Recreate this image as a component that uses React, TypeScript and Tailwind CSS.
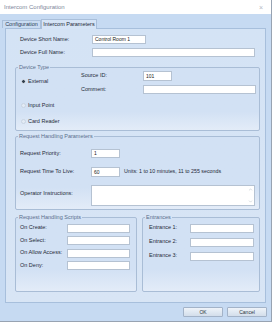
import { ChevronUp, ChevronDown } from "lucide-react";

const Box = ({ className = "", value }: { className?: string; value?: string }) => (
  <div
    className={
      "h-[9px] shrink-0 bg-white border border-[#b5c2d2] flex items-center pl-[2px] text-[5px] text-[#222] " +
      className
    }
  >
    {value}
  </div>
);

const Radio = ({ on, label, className = "" }: { on?: boolean; label: string; className?: string }) => (
  <div className={"h-[7px] flex items-center gap-[2px] pl-[5px] " + className}>
    <span
      className={
        on
          ? "w-[5px] h-[5px] rounded-full bg-[#34414f] border border-[#dfe8f4]"
          : "w-[5px] h-[5px] rounded-full bg-[#e3ebf5] border border-[#c9d4e2]"
      }
    />
    <span>{label}</span>
  </div>
);

const Legend = ({ children }: { children: string }) => (
  <legend className="ml-[2px] px-[1px] leading-[7px] text-[5.5px] text-[#5a6f8c]">{children}</legend>
);

const group =
  "border border-[#a9bdd6] rounded-[2px] bg-linear-to-b from-[#d2e1f4] via-[#d2e1f4] via-70% to-[#e3ecf8]";

export default function App() {
  return (
    <div className="w-[272px] h-[322px] flex flex-col bg-[#c6daf2] border-r border-b border-[#98a3b2] font-['Liberation_Sans',Arial,sans-serif] text-[5.5px] text-[#1f2a38] leading-none">
      {/* title bar */}
      <div className="h-[14px] shrink-0 bg-white flex items-center justify-between pl-[4px] pr-[8px]">
        <span className="text-[6px] text-[#7c879a]">Intercom Configuration</span>
        <span className="text-[7px] text-[#b4b9c2]">×</span>
      </div>

      {/* tabs */}
      <div className="h-[14px] shrink-0 flex items-end pl-[2px]">
        <div className="h-[8px] w-[39px] flex items-center justify-center border border-b-0 border-[#a9bfda] bg-[#c9dcf2] text-[#2c3e55]">
          Configuration
        </div>
        <div className="h-[10px] w-[56px] flex items-center justify-center border border-b-0 border-[#a9bfda] bg-[#d5e4f6] text-[#1f2a38] relative top-[1px]">
          Intercom Parameters
        </div>
      </div>

      {/* panel */}
      <div className="ml-[5px] w-[261px] h-[275px] shrink-0 border border-[#a7bfdc] bg-linear-to-b from-[#d4e3f5] to-[#d8e5f5] pl-[9px] pr-[5px] pt-[6px] flex flex-col">
        <div className="flex items-center">
          <div className="w-[77px] pl-[5px]">Device Short Name:</div>
          <Box className="w-[54px]" value="Control Room 1" />
        </div>
        <div className="flex items-center mt-[4px]">
          <div className="w-[77px] pl-[5px]">Device Full Name:</div>
          <Box className="w-[163px]" />
        </div>

        <fieldset className={group + " mt-[7px]"}>
          <Legend>Device Type</Legend>
          <div className="flex">
            <div className="w-[65px] flex flex-col pt-[7px] pb-[5px]">
              <Radio on label="External" />
              <Radio label="Input Point" className="mt-[17px]" />
              <Radio label="Card Reader" className="mt-[9px]" />
            </div>
            <div className="flex flex-col">
              <div className="flex items-center">
                <div className="w-[62px]">Source ID:</div>
                <Box className="w-[29px] h-[10px]" value="101" />
              </div>
              <div className="flex items-center mt-[4px]">
                <div className="w-[62px]">Comment:</div>
                <Box className="w-[113px]" />
              </div>
            </div>
          </div>
        </fieldset>

        <fieldset className={group + " mt-[2px] pb-[3px]"}>
          <Legend>Request Handling Parameters</Legend>
          <div className="flex items-center mt-[9px]">
            <div className="w-[75px] pl-[4px]">Request Priority:</div>
            <Box className="w-[29px]" value="1" />
          </div>
          <div className="flex items-center mt-[9px]">
            <div className="w-[75px] pl-[4px]">Request Time To Live:</div>
            <Box className="w-[29px] h-[10px]" value="60" />
            <span className="ml-[4px] text-[5.3px]">Units: 1 to 10 minutes, 11 to 255 seconds</span>
          </div>
          <div className="flex mt-[8px]">
            <div className="w-[75px] pl-[4px] pt-[6px]">Operator Instructions:</div>
            <div className="w-[164px] h-[21px] bg-white border border-[#b5c2d2] flex justify-end">
              <div className="w-[7px] flex flex-col justify-between items-center py-[1px] text-[#a3acb8]">
                <ChevronUp size={5} strokeWidth={2} />
                <ChevronDown size={5} strokeWidth={2} />
              </div>
            </div>
          </div>
        </fieldset>

        <div className="flex gap-[5px] mt-[4px]">
          <fieldset className={group + " w-[122px] pb-[21px]"}>
            <Legend>Request Handling Scripts</Legend>
            <div className="flex flex-col gap-[3.5px] pt-[2.5px]">
              {["On Create:", "On Select:", "On Allow Access:", "On Deny:"].map((l) => (
                <div key={l} className="flex items-center">
                  <div className="w-[51px] pl-[4px]">{l}</div>
                  <Box className="w-[63px]" />
                </div>
              ))}
            </div>
          </fieldset>
          <fieldset className={group + " w-[118px]"}>
            <Legend>Entrances</Legend>
            <div className="flex flex-col gap-[5px] pt-[2.5px]">
              {["Entrance 1:", "Entrance 2:", "Entrance 3:"].map((l) => (
                <div key={l} className="flex items-center">
                  <div className="w-[47px] pl-[6px]">{l}</div>
                  <Box className="w-[64px]" />
                </div>
              ))}
            </div>
          </fieldset>
        </div>
      </div>

      {/* buttons */}
      <div className="flex justify-end gap-[4px] pr-[4px] mt-[4px]">
        {["OK", "Cancel"].map((b) => (
          <div
            key={b}
            className="w-[40px] h-[10px] flex items-center justify-center border border-[#a3b3c8] rounded-[1px] bg-linear-to-b from-[#eef3f9] to-[#d3deeb] text-[5px] text-[#2a3442]"
          >
            {b}
          </div>
        ))}
      </div>
    </div>
  );
}
